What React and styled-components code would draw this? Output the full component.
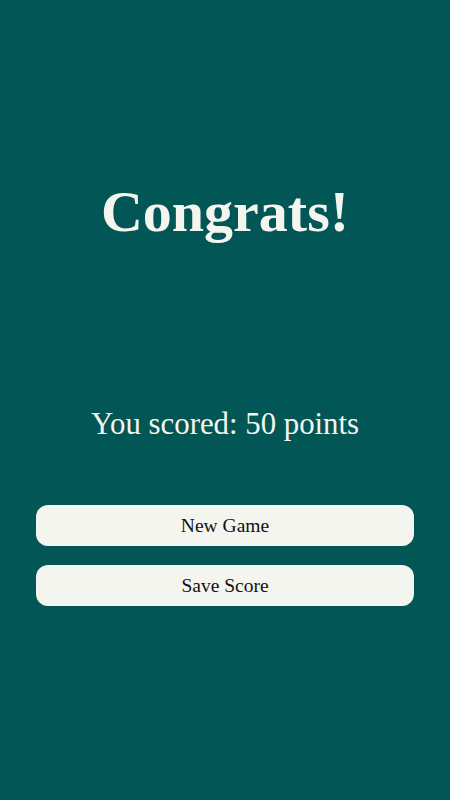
import styled, { createGlobalStyle } from "styled-components"

const GlobalStyle = createGlobalStyle`
    body {
        margin: 0;
        background: #025656;
        font-family: "Liberation Serif", "Times New Roman", serif;
    }
`

const Page = styled.div`
    min-height: 100vh;
    padding: 178px 36px 0;
    box-sizing: border-box;
    display: flex;
    flex-direction: column;
    align-items: stretch;
    color: #f5f5ef;
`
const Title = styled.h1`
    margin: 0;
    font-size: 58px;
    font-weight: bold;
    text-align: center;
`
const Score = styled.p`
    margin: 162px 0 0;
    font-size: 30.8px;
    text-align: center;
`
const Buttons = styled.div`
    margin-top: 63px;
    display: flex;
    flex-direction: column;
    gap: 19px;
`
const Button = styled.button`
    height: 41px;
    border: none;
    border-radius: 12px;
    background: #f5f5ef;
    color: #111;
    font-family: inherit;
    font-size: 19.5px;
    cursor: pointer;
`

const App = () => {
    return (
        <>
            <GlobalStyle />
            <Page>
                <Title>Congrats!</Title>
                <Score>You scored: 50 points</Score>
                <Buttons>
                    <Button>New Game</Button>
                    <Button>Save Score</Button>
                </Buttons>
            </Page>
        </>
    )
}

export default App
